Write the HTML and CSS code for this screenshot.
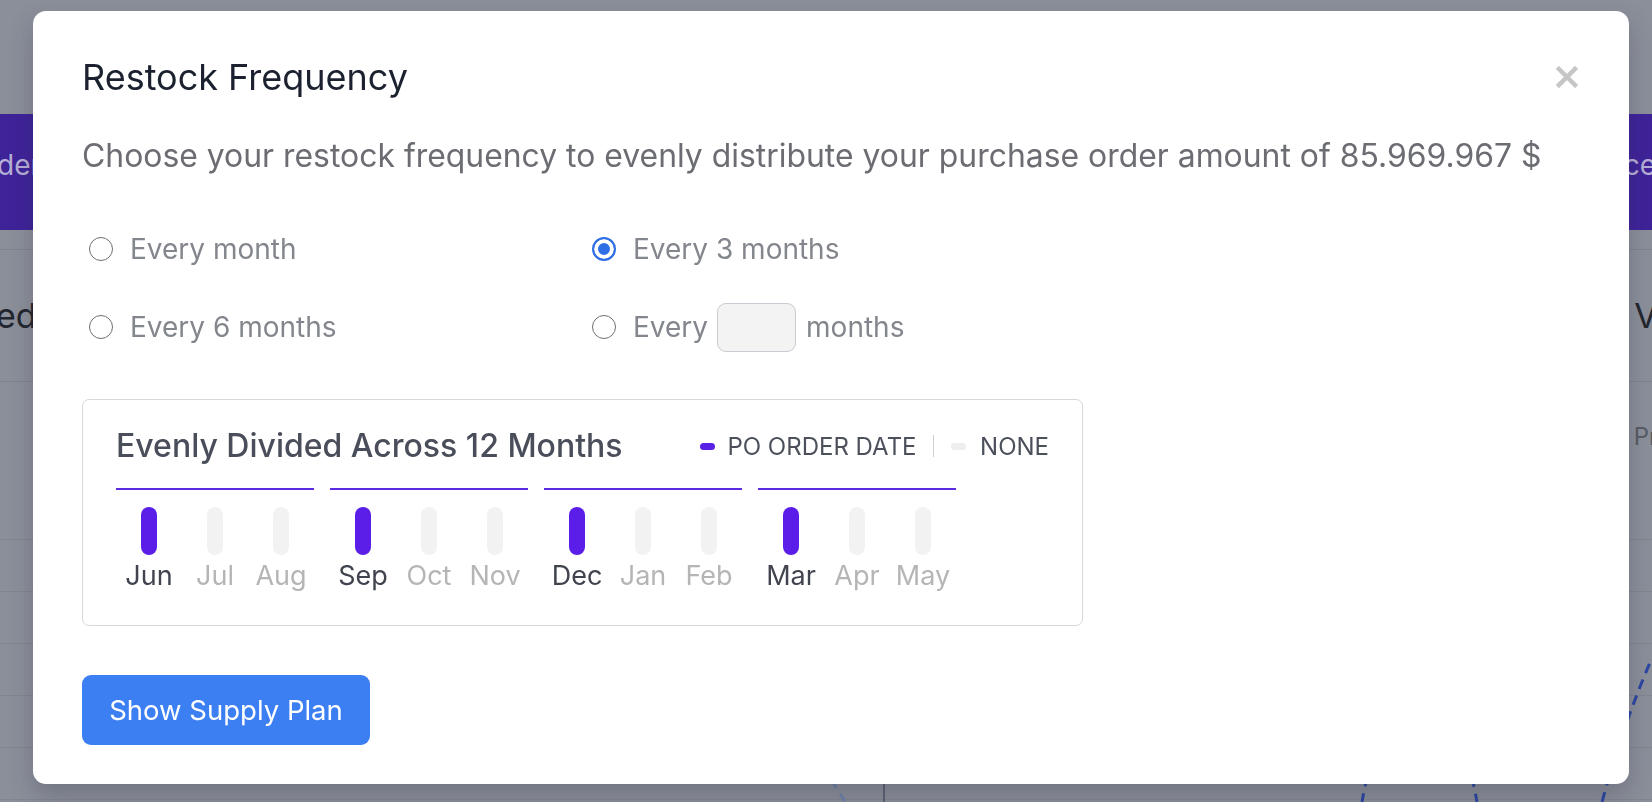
FILE: index.html
```html
<!DOCTYPE html>
<html lang="en">
<head>
    <meta charset="UTF-8">
    <meta name="viewport" content="width=device-width, initial-scale=1.0">
    <title>Restock Frequency</title>
    <link rel="stylesheet" href="styles.css">
</head>
<body>

<!-- page behind the dimmed overlay -->
<div class="page">
    <div class="page-top"></div>
    <div class="band">
        <span class="band-text band-left">der</span>
        <span class="band-text band-right">ce</span>
    </div>
    <div class="page-head">
        <span class="head-text">ed</span>
        <span class="head-text">Vi</span>
    </div>
    <div class="page-rows">
        <div class="row row-first"><span></span><span class="row-text">Pr</span></div>
        <div class="row"></div>
        <div class="row"></div>
        <div class="row"></div>
        <div class="row"></div>
        <div class="row"></div>
        <svg class="chart" width="1652" height="440" viewBox="0 0 1652 440">
            <path d="M 832 418 Q 838 430 846 440" stroke="#6f82a8" stroke-width="3" fill="none" stroke-dasharray="9 7"/>
            <line x1="884" y1="418" x2="884" y2="440" stroke="#4e5466" stroke-width="1.5"/>
            <path d="M 1362 440 Q 1364 428 1367 416" stroke="#2c46a3" stroke-width="3" fill="none" stroke-dasharray="9 7"/>
            <path d="M 1472 416 Q 1475 428 1477 440" stroke="#2c46a3" stroke-width="3" fill="none" stroke-dasharray="9 7"/>
            <path d="M 1602 440 Q 1624 360 1652 296" stroke="#2c46a3" stroke-width="3" fill="none" stroke-dasharray="10 7"/>
        </svg>
    </div>
</div>

<div class="modal">
    <div class="modal-header">
        <h2 class="modal-title">Restock Frequency</h2>
        <button class="close-btn" aria-label="Close">
            <svg width="22" height="22" viewBox="0 0 22 22">
                <path d="M3 3 L19 19 M19 3 L3 19" stroke="#c6c6c6" stroke-width="4.5" stroke-linecap="square"/>
            </svg>
        </button>
    </div>

    <p class="modal-desc">Choose your restock frequency to evenly distribute your purchase order amount of 85.969.967 $</p>

    <div class="options">
        <label class="option"><input type="radio" name="freq"> Every month</label>
        <label class="option"><input type="radio" name="freq" checked> Every 3 months</label>
        <label class="option"><input type="radio" name="freq"> Every 6 months</label>
        <label class="option"><input type="radio" name="freq"> Every <input type="text" class="months-input"> months</label>
    </div>

    <div class="plan-card">
        <div class="plan-header">
            <h3 class="plan-title">Evenly Divided Across 12 Months</h3>
            <div class="legend">
                <span class="pill pill-on"></span>
                <span>PO ORDER DATE</span>
                <span class="legend-sep"></span>
                <span class="pill pill-off"></span>
                <span>NONE</span>
            </div>
        </div>

        <div class="quarters">
            <div class="quarter">
                <div class="month active"><div class="bar"></div><span>Jun</span></div>
                <div class="month"><div class="bar"></div><span>Jul</span></div>
                <div class="month"><div class="bar"></div><span>Aug</span></div>
            </div>
            <div class="quarter">
                <div class="month active"><div class="bar"></div><span>Sep</span></div>
                <div class="month"><div class="bar"></div><span>Oct</span></div>
                <div class="month"><div class="bar"></div><span>Nov</span></div>
            </div>
            <div class="quarter">
                <div class="month active"><div class="bar"></div><span>Dec</span></div>
                <div class="month"><div class="bar"></div><span>Jan</span></div>
                <div class="month"><div class="bar"></div><span>Feb</span></div>
            </div>
            <div class="quarter">
                <div class="month active"><div class="bar"></div><span>Mar</span></div>
                <div class="month"><div class="bar"></div><span>Apr</span></div>
                <div class="month"><div class="bar"></div><span>May</span></div>
            </div>
        </div>
    </div>

    <button class="supply-btn">Show Supply Plan</button>
</div>

</body>
</html>
```

FILE: styles.css
```css
* {
    box-sizing: border-box;
}

body {
    font-family: Inter, 'Liberation Sans', sans-serif;
    margin: 0;
    height: 100vh;
    overflow: hidden;
    background-color: #8b8f9a;
}

/* ---- dimmed page behind ---- */

.page {
    height: 100vh;
    position: relative;
}

.page-top {
    height: 114px;
}

.band {
    height: 116px;
    background-color: #3f2399;
    display: flex;
    justify-content: space-between;
    align-items: center;
    padding-bottom: 14px;
}

.band-text {
    font-size: 28px;
    color: #b7afd6;
}

.band-left {
    margin-left: -3px;
}

.band-right {
    margin-right: -4px;
}

.page-head {
    margin-top: 19px;
    height: 133px;
    border-top: 1px solid #7f838d;
    border-bottom: 1px solid #7f838d;
    display: flex;
    justify-content: space-between;
    align-items: center;
}

.head-text {
    font-size: 34px;
    color: #23262e;
    margin-left: -4px;
}

.head-text:last-child {
    margin-right: -14px;
}

.page-rows {
    position: relative;
}

.row {
    height: 52px;
    border-bottom: 1px solid #82868f;
    display: flex;
    justify-content: space-between;
}

.row-first {
    height: 158px;
    padding-top: 40px;
}

.row-text {
    font-size: 24px;
    color: #595c64;
    margin-right: -6px;
}

.chart {
    position: absolute;
    left: 0;
    top: -20px;
}

/* ---- modal ---- */

.modal {
    position: fixed;
    left: 33px;
    top: 11px;
    width: 1596px;
    background-color: #fff;
    border-radius: 13px;
    padding: 45px 49px 39px 49px;
    box-shadow: 0 12px 24px rgba(40, 44, 60, 0.25);
}

.modal-header {
    display: flex;
    justify-content: space-between;
    align-items: center;
}

.modal-title {
    margin: 0;
    font-size: 36px;
    line-height: 42px;
    font-weight: 400;
    color: #1c2130;
}

.close-btn {
    background: none;
    border: none;
    padding: 0;
    margin-right: 2px;
    cursor: pointer;
    display: flex;
}

.modal-desc {
    margin: 39px 0 0 0;
    font-size: 31.9px;
    line-height: 38px;
    color: #6b6d73;
}

.options {
    margin-top: 49px;
    padding-left: 7px;
    display: grid;
    grid-template-columns: 503px auto;
    row-gap: 28px;
}

.option {
    display: flex;
    align-items: center;
    height: 50px;
    font-size: 28px;
    color: #83868c;
}

.option input[type="radio"] {
    appearance: none;
    -webkit-appearance: none;
    width: 24px;
    height: 24px;
    margin: 0 17px 0 0;
    border: 1.5px solid #6f6f6f;
    border-radius: 50%;
    background-color: #fff;
}

.option input[type="radio"]:checked {
    border: 2px solid #2f6fe6;
    background-color: #2f6fe6;
    box-shadow: inset 0 0 0 4px #fff;
}

.months-input {
    width: 79px;
    height: 49px;
    margin: 0 10px 0 9px;
    border: 1.5px solid #c8cbd1;
    border-radius: 9px;
    background-color: #f3f3f3;
}

/* ---- plan card ---- */

.plan-card {
    margin-top: 47px;
    width: 1001px;
    border: 1.5px solid #d8d8d8;
    border-radius: 7px;
    padding: 28px 33px 34px 33px;
}

.plan-header {
    display: flex;
    justify-content: space-between;
    align-items: center;
}

.plan-title {
    margin: 0;
    font-size: 32px;
    line-height: 36px;
    font-weight: 500;
    color: #4a4e5a;
}

.legend {
    display: flex;
    align-items: center;
    font-size: 24px;
    color: #4b505b;
}

.pill {
    width: 15px;
    height: 7px;
    border-radius: 4px;
    margin-right: 12px;
}

.pill-on {
    background-color: #5a22e6;
}

.pill-off {
    background-color: #eeeeee;
    margin-right: 14px;
}

.legend-sep {
    width: 1.5px;
    height: 22px;
    background-color: #cfcfcf;
    margin: 0 17px 0 16px;
}

.quarters {
    margin-top: 24px;
    display: flex;
    gap: 16px;
}

.quarter {
    display: flex;
    border-top: 2px solid #5a2be0;
}

.month {
    width: 66px;
    display: flex;
    flex-direction: column;
    align-items: center;
}

.bar {
    margin-top: 17px;
    width: 16px;
    height: 48px;
    border-radius: 8px;
    background-color: #f2f2f2;
}

.month span {
    margin-top: 6px;
    font-size: 27px;
    line-height: 30px;
    color: #b5b5b5;
}

.month.active .bar {
    background-color: #5a1ee8;
}

.month.active span {
    color: #41444f;
}

/* ---- button ---- */

.supply-btn {
    margin-top: 49px;
    width: 288px;
    height: 70px;
    border: none;
    border-radius: 9px;
    background-color: #3b7ff3;
    color: #fff;
    font-family: Inter, 'Liberation Sans', sans-serif;
    font-size: 27.5px;
    cursor: pointer;
}
```
